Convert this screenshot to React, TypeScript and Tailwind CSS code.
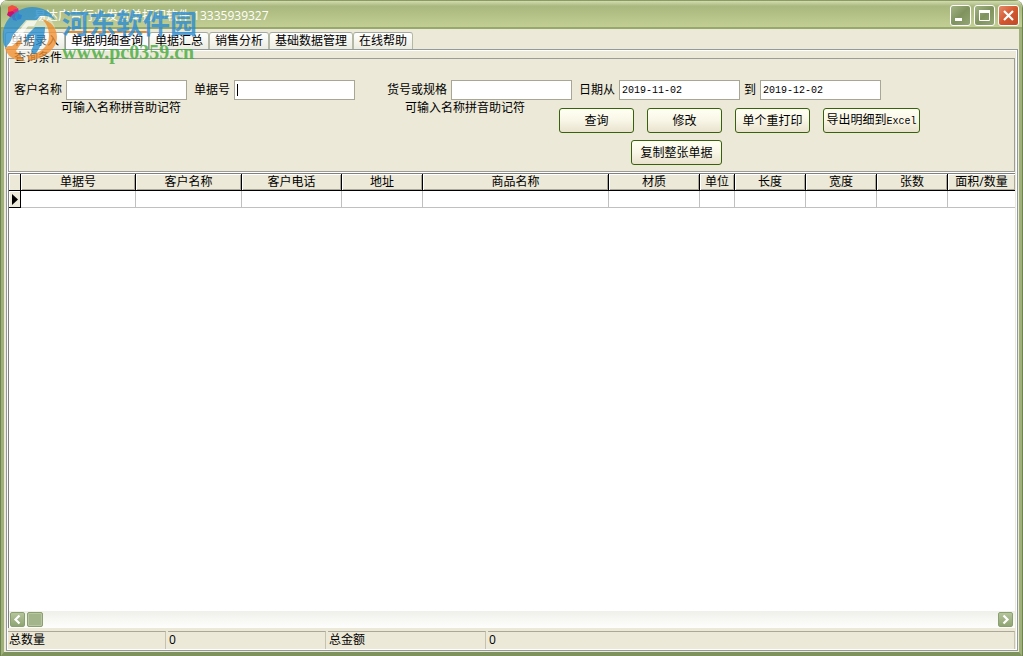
import type { ReactNode } from "react";

const tabs = ["单据录入", "单据明细查询", "单据汇总", "销售分析", "基础数据管理", "在线帮助"];

const columns = [
  { title: "单据号", width: 115 },
  { title: "客户名称", width: 106 },
  { title: "客户电话", width: 100 },
  { title: "地址", width: 81 },
  { title: "商品名称", width: 186 },
  { title: "材质", width: 91 },
  { title: "单位", width: 35 },
  { title: "长度", width: 71 },
  { title: "宽度", width: 71 },
  { title: "张数", width: 71 },
  { title: "面积/数量", width: 67 },
];

function AppIcon() {
  return (
    <svg width="18" height="18" viewBox="0 0 18 18" aria-hidden="true">
      <path d="M2 2l4-2 5 2-1 5-5 2-3-2z" fill="#f0503c" />
      <path d="M2 7l5-1 3 3-1 4-5-1-3-2z" fill="#c8146e" />
      <path d="M7 5l5-2 1 4-4 3z" fill="#e6287d" />
      <path d="M9 9l4-1 1 4-4 2z" fill="#2fa36a" />
      <path d="M6 12l4 1 1 3-4-1z" fill="#7d3bb4" />
      <path d="M12 9l4 1-1 4-4 1z" fill="#4a55d8" />
    </svg>
  );
}

function WindowButton({ label, danger, children }: { label: string; danger?: boolean; children: ReactNode }) {
  return (
    <button
      aria-label={label}
      className={`h-[21px] w-[21px] rounded-[3px] border border-white ${
        danger
          ? "bg-linear-to-br from-[#e48a68] via-[#d2572f] to-[#c04a28]"
          : "bg-linear-to-br from-[#a3b384] via-[#80935f] to-[#94a673]"
      }`}
    >
      <svg width="19" height="19" viewBox="0 0 19 19" fill="none" stroke="#fff">
        {children}
      </svg>
    </button>
  );
}

function TitleBar() {
  return (
    <header className="flex h-[29px] items-center border-t border-b-2 border-t-[#8a9c63] border-b-[#97a86c] bg-linear-to-b from-[#d3dcb0] via-[#a9b87e] via-20% to-[#c2ce94] pr-[3px] pl-[5px]">
      <AppIcon />
      <h1 className="ml-[10px] flex-1 pt-1 text-xs whitespace-nowrap text-white">
        易达广告行业发货单打印软件 13335939327
      </h1>
      <div className="flex gap-[3px] pt-[3px]">
        <WindowButton label="最小化">
          <path d="M4 13.5h7" strokeWidth="3" />
        </WindowButton>
        <WindowButton label="最大化">
          <path d="M4.5 5v9.5h10V5" />
          <path d="M4 5.5h11" strokeWidth="3" />
        </WindowButton>
        <WindowButton label="关闭" danger>
          <path d="M5 5l9 9M14 5l-9 9" strokeWidth="2.2" />
        </WindowButton>
      </div>
    </header>
  );
}

function TabStrip() {
  return (
    <nav role="tablist" className="flex h-5 items-end pl-px">
      {tabs.map((tab) => {
        const active = tab === "单据明细查询";
        return (
          <button
            key={tab}
            role="tab"
            aria-selected={active}
            className={`rounded-t-[3px] border-x px-[5px] text-xs leading-4 whitespace-nowrap ${
              active
                ? "h-[18px] border-t-2 border-x-[#919b9c] border-t-[#e68b2c] bg-[#fcfcfe]"
                : "h-[17px] border-t border-x-[#b5b8a5] border-t-[#a5aaa0] bg-linear-to-b from-white to-[#ecebe0]"
            }`}
          >
            {tab}
          </button>
        );
      })}
    </nav>
  );
}

function Field({ id, label, value, focused }: { id: string; label: string; value?: string; focused?: boolean }) {
  return (
    <div className="flex items-center gap-1">
      <label htmlFor={id} className="whitespace-nowrap">
        {label}
      </label>
      <input
        id={id}
        defaultValue={value}
        className={`h-5 w-[121px] border border-[#a8a795] bg-white px-[2px] font-['Liberation_Mono','Noto_Sans_CJK_SC',monospace] text-[10px] outline-none ${
          focused
            ? "bg-[linear-gradient(#000,#000)] bg-[length:1px_12px] bg-[position:2px_center] bg-no-repeat"
            : ""
        }`}
      />
    </div>
  );
}

function ActionButton({ className, children }: { className: string; children: ReactNode }) {
  return (
    <button
      className={`h-[25px] rounded-[3px] border border-[#37620b] bg-linear-to-b from-[#fffff4] via-[#f8f6e6] to-[#e9e2cf] whitespace-nowrap ${className}`}
    >
      {children}
    </button>
  );
}

function QueryForm() {
  return (
    <fieldset className="mt-px h-[120px] min-w-0 border border-[#9b9c98] pl-[5px] shadow-[inset_1px_0_#fff,0_1px_#fff]">
      <legend className="h-3 leading-3">查询条件</legend>
      <div className="flex pt-4">
        <Field id="customer" label="客户名称" />
        <div className="ml-[7px]">
          <Field id="bill" label="单据号" focused />
        </div>
        <div className="ml-8">
          <Field id="goods" label="货号或规格" />
        </div>
        <div className="ml-[7px]">
          <Field id="from" label="日期从" value="2019-11-02" />
        </div>
        <div className="ml-1">
          <Field id="to" label="到" value="2019-12-02" />
        </div>
      </div>
      <div className="flex items-start pl-[47px] whitespace-nowrap">
        <p className="w-[344px] leading-4">可输入名称拼音助记符</p>
        <p className="w-[154px] leading-4">可输入名称拼音助记符</p>
        <div className="pt-2">
          <div className="flex gap-[13px]">
            <ActionButton className="w-[75px]">查询</ActionButton>
            <ActionButton className="w-[75px]">修改</ActionButton>
            <ActionButton className="w-[75px]">单个重打印</ActionButton>
            <ActionButton className="w-[97px]">
              导出明细到
              <span className="font-['Liberation_Mono',monospace] text-[10px]">Excel</span>
            </ActionButton>
          </div>
          <ActionButton className="mt-[7px] ml-[72px] w-[91px]">复制整张单据</ActionButton>
        </div>
      </div>
    </fieldset>
  );
}

function ResultTable() {
  return (
    <table className="w-full table-fixed border-separate border-spacing-0">
      <colgroup>
        <col width={12} />
        {columns.map((col) => (
          <col key={col.title} width={col.width} />
        ))}
      </colgroup>
      <thead>
        <tr className="h-[17px] bg-[#ece9d8]">
          <th className="border-r border-b border-black p-0 shadow-[inset_1px_1px_#fff]" />
          {columns.map((col) => (
            <th
              key={col.title}
              className="overflow-hidden border-r border-b border-black p-0 leading-4 font-normal whitespace-nowrap shadow-[inset_1px_1px_#fff,inset_-1px_-1px_#aca899] last:border-r-0"
            >
              {col.title}
            </th>
          ))}
        </tr>
      </thead>
      <tbody>
        <tr className="h-[17px]">
          <td className="border-r border-b border-black bg-[#ece9d8] p-0 shadow-[inset_1px_1px_#fff]">
            <svg width="10" height="12" viewBox="0 0 10 12" className="block" aria-label="当前行">
              <path d="M3 1v11l6-5.5z" fill="#000" />
            </svg>
          </td>
          {columns.map((col) => (
            <td key={col.title} className="border-r border-b border-[#c0c0c0] p-0 last:border-r-0" />
          ))}
        </tr>
      </tbody>
    </table>
  );
}

function ScrollArrow({ label, d }: { label: string; d: string }) {
  return (
    <button
      aria-label={label}
      className="h-[15px] w-[15px] rounded-[2px] border border-[#8ba070] bg-linear-to-b from-[#b5c49c] to-[#8fa573]"
    >
      <svg width="13" height="13" viewBox="0 0 13 13" fill="none" stroke="#fff" strokeWidth="2.2">
        <path d={d} />
      </svg>
    </button>
  );
}

function ScrollBar() {
  return (
    <div className="flex h-[17px] items-center gap-[2px] bg-linear-to-b from-[#f0f0ea] to-[#fefefd] pr-[2px] pl-px">
      <ScrollArrow label="向左滚动" d="M8.5 2.5l-4 4 4 4" />
      <div className="h-[15px] w-4 rounded-[2px] border border-[#8ba070] bg-[#a3b58a] shadow-[inset_0_0_0_1px_#b8c6a2]" />
      <div className="flex-1" />
      <ScrollArrow label="向右滚动" d="M4.5 2.5l4 4-4 4" />
    </div>
  );
}

function StatusBar() {
  const cell = "border-t border-r border-t-[#aca899] border-r-[#c5c2b0] pl-px leading-4";
  return (
    <footer className="mt-[3px] flex h-[18px] gap-[2px] bg-[#ece9d8]">
      <div className={`w-[158px] ${cell}`}>总数量</div>
      <div className={`w-[158px] pl-[2px] ${cell}`}>0</div>
      <div className={`w-[158px] ${cell}`}>总金额</div>
      <div className={`flex-1 pl-[2px] ${cell}`}>0</div>
    </footer>
  );
}

function Watermark() {
  return (
    <div className="pointer-events-none absolute top-[6px] left-px flex opacity-80" aria-hidden="true">
      <svg width="56" height="56" viewBox="0 0 56 56">
        <circle cx="28" cy="29" r="26" fill="#fff" opacity=".45" />
        <path
          d="M1 34C-1 16 12 2 30 1c11 0 19 5 23 13-5-4-10-5-15-4l-3 4H24L11 29l-3 8-4 5c-2-2-3-5-3-8z"
          fill="#2a8fd0"
        />
        <path d="M25 29l8-8h10c0 9-3 18-10 28l-4-4c3-6 4-11 4-16h-3l-7 9z" fill="#2a8fd0" />
        <path d="M40 13c9 2 15 9 15 18 0 12-12 21-27 24l-3-5c12-2 22-9 22-20 0-7-2-12-7-17z" fill="#f29234" />
        <path d="M3 42l14-8 3 2-6 9 9 10C12 55 5 50 3 42z" fill="#f29234" />
        <path d="M5 40l20-25h10l-3 5h-6L15 36l-5 4z" fill="#fff" />
      </svg>
      <div className="ml-1 whitespace-nowrap">
        <p className="text-[27px] leading-[35px] font-bold text-[#2b8bd2]">河东软件园</p>
        <p className="font-['Liberation_Serif',serif] text-xl leading-[22px] font-bold text-[#45ab3c]">
          www.pc0359.cn
        </p>
      </div>
    </div>
  );
}

export default function App() {
  return (
    <div className="relative flex min-h-screen flex-col overflow-hidden rounded-t-lg border-x border-[#6d8450] bg-[#ece9d8] font-['Open_Sans','Noto_Sans_CJK_SC',sans-serif] text-xs text-black">
      <TitleBar />
      <div className="flex flex-1 flex-col border-x-3 border-b-4 border-x-[#9fb07a] border-b-[#7d925c] pr-px pb-px">
        <TabStrip />
        <main className="ml-[2px] flex flex-1 flex-col border border-[#919b9c] bg-[#ece9d8]">
          <div className="flex flex-1 flex-col border border-white pr-px">
            <QueryForm />
            <section className="mt-px flex flex-1 flex-col border-t border-l border-[#808080] bg-white">
              <ResultTable />
              <div className="flex-1" />
              <ScrollBar />
            </section>
            <StatusBar />
          </div>
        </main>
      </div>
      <Watermark />
    </div>
  );
}
